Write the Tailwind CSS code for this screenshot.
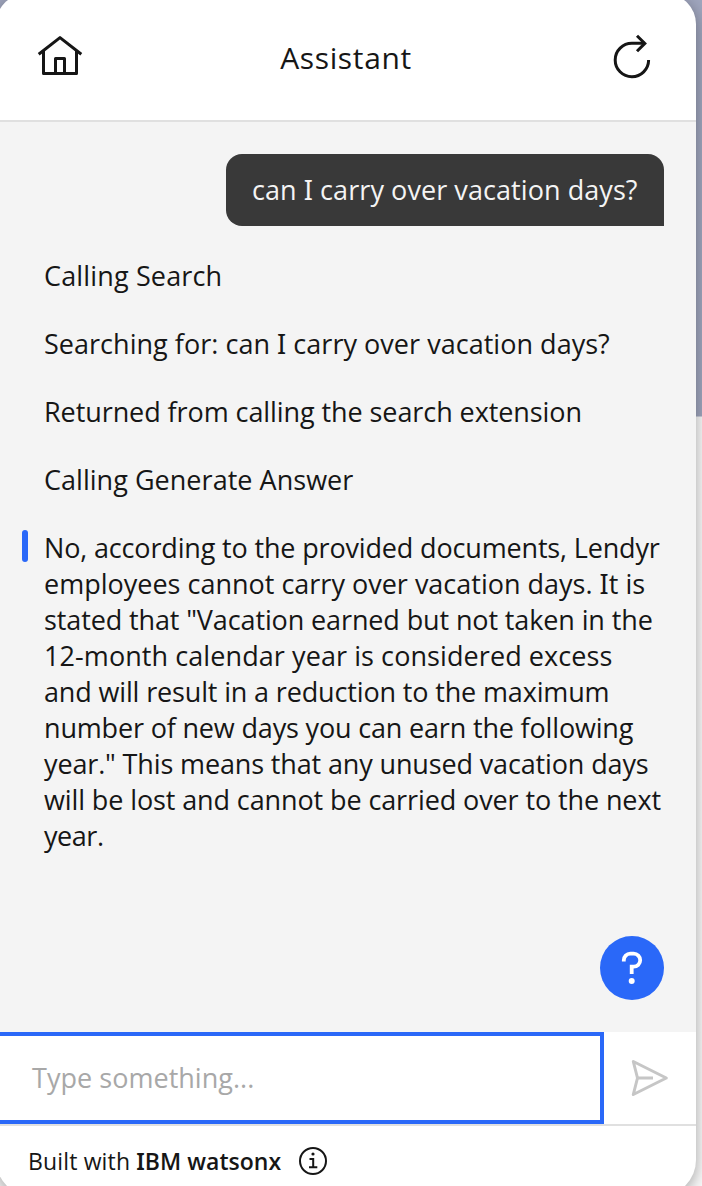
<!DOCTYPE html>
<html lang="en">
<head>
<meta charset="utf-8">
<title>Assistant</title>
<script src="https://cdn.jsdelivr.net/npm/@tailwindcss/browser@4"></script>
</head>
<body class="h-[1186px] w-[702px] overflow-hidden bg-gradient-to-b from-[#a0a6be] from-[416px] to-[#fafafa] to-[417px] font-['Open_Sans','Noto_Sans',sans-serif] text-[#161616]">
<div class="-mt-1.5 -ml-1 flex h-[1202px] w-[700px] flex-col overflow-hidden rounded-t-[30px] rounded-b-[36px] bg-white pt-1.5 pl-1 shadow-[0_4px_16px_rgba(0,0,0,0.35)]">
  <header class="flex h-[122px] shrink-0 items-center justify-between border-b-2 border-[#e0e0e0] pr-11 pl-9">
    <svg class="-mt-2 size-12" viewBox="36 32 48 48" fill="none" stroke="#161616" stroke-width="3" stroke-linejoin="round">
      <path d="M38.7 54.2 60 37.6 81.3 54.2"/>
      <path d="M43.5 50.5V73.5H76.5V50.5"/>
      <path d="M55.5 73.5V58.5H64.5V73.5"/>
    </svg>
    <h1 class="-mt-1 mr-1 text-[30px] leading-9 tracking-[0.65px]">Assistant</h1>
    <svg class="-mt-1.5 h-12 w-10" viewBox="612 33 40 48" fill="none" stroke="#161616" stroke-width="3">
      <path d="M648.6 60A16.7 16.7 0 1 1 632 43.3H645"/>
      <path d="M637 35.8 644.8 43.4 637 51.2"/>
    </svg>
  </header>

  <main class="relative flex h-[910px] shrink-0 flex-col bg-[#f4f4f4] pt-8 pr-8 pl-11 text-[27px] leading-9 whitespace-nowrap">
    <div class="flex h-[72px] w-[438px] items-center self-end rounded-t-[16px] rounded-bl-[16px] bg-[#393939] pl-[26px] text-[#f4f4f4]">
      <p class="tracking-[0.07px]">can <span class="font-['Noto_Sans']">I</span> carry over vacation days?</p>
    </div>
    <div class="mt-8 flex flex-col gap-8">
      <p class="tracking-[0.15px]">Calling Search</p>
      <p class="tracking-[0.03px]">Searching for: can <span class="font-['Noto_Sans']">I</span> carry over vacation days?</p>
      <p class="tracking-[-0.08px]">Returned from calling the search extension</p>
      <p class="tracking-[0.03px]">Calling Generate Answer</p>
      <div class="relative">
        <span class="absolute top-0 -left-[22px] h-8 w-1.5 rounded-full bg-[#2a68f8]"></span>
        <p>
          <span class="block tracking-[-0.16px]">No, according to the provided documents, Lendyr</span>
          <span class="block">employees cannot carry over vacation days. <span class="font-['Noto_Sans']">I</span>t is</span>
          <span class="block tracking-[-0.12px]">stated that "Vacation earned but not taken in the</span>
          <span class="block tracking-[0.08px]">12-month calendar year is considered excess</span>
          <span class="block tracking-[-0.15px]">and will result in a reduction to the maximum</span>
          <span class="block tracking-[-0.17px]">number of new days you can earn the following</span>
          <span class="block tracking-[-0.14px]">year." This means that any unused vacation days</span>
          <span class="block tracking-[-0.11px]">will be lost and cannot be carried over to the next</span>
          <span class="block tracking-[-0.45px]">year.</span>
        </p>
      </div>
    </div>
    <button class="absolute right-8 bottom-8 size-16 rounded-full bg-[#2a68f8]" aria-label="Help">
      <svg class="size-16" viewBox="600 936 64 64" fill="none">
        <path d="M623.8 961.5V960.3A6.5 6.5 0 0 1 630.3 953.7H633.7A6.5 6.5 0 0 1 640.2 960.3A6.5 6.5 0 0 1 633.7 966.7H631.7V974" stroke="#fff" stroke-width="3.8"/>
        <circle cx="631.7" cy="981" r="3" fill="#fff"/>
      </svg>
    </button>
  </main>

  <div class="flex h-[94px] shrink-0 border-b-2 border-[#e0e0e0] bg-white">
    <div class="flex w-[604px] items-center border-4 border-l-0 border-[#2a68f8] pl-8 text-[27px] leading-9 tracking-[0.03px] text-[#a8a8a8]">Type something...</div>
    <div class="flex flex-1 items-center justify-center">
      <svg class="size-10" viewBox="630 1058 40 40" fill="none" stroke="#c6c6c6" stroke-width="3" stroke-linejoin="round">
        <path d="M633.3 1061.5 666.3 1078 633.3 1094.5 637.5 1078Z"/>
        <path d="M637.5 1078H653"/>
      </svg>
    </div>
  </div>

  <footer class="flex h-[70px] shrink-0 items-center pl-7 text-[23px] leading-8 whitespace-nowrap">
    <p class="tracking-[0.15px]">Built with <strong class="font-semibold tracking-[0.03px]"><span class="font-['Noto_Sans']">I</span>BM watsonx</strong></p>
    <svg class="ml-[17px] size-[30px]" viewBox="298 1146 30 30" fill="none" stroke="#161616" stroke-width="2">
      <circle cx="313" cy="1161" r="13"/>
      <path d="M309.5 1159H313.2V1167M309 1167.2H317.3"/>
      <circle cx="313" cy="1154" r="1.6" fill="#161616" stroke="none"/>
    </svg>
  </footer>
</div>
</body>
</html>
